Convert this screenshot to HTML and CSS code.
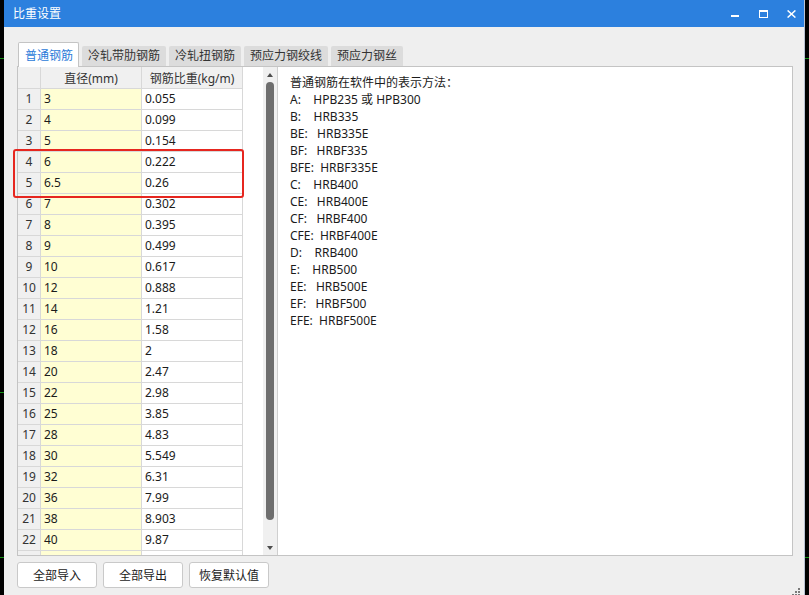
FILE: index.html
```html
<!DOCTYPE html>
<html lang="zh-CN">
<head>
<meta charset="utf-8">
<title>比重设置</title>
<link rel="stylesheet" href="styles.css">
</head>
<body>
<div class="window">
  <div class="titlebar">
    <span class="title">比重设置</span>
    <div class="controls">
      <svg class="ctl" width="8" height="8" viewBox="0 0 8 8"><rect x="0" y="5" width="8" height="2" fill="#fff"/></svg>
      <svg class="ctl ctl-max" width="9" height="8" viewBox="0 0 9 8"><rect x="0.5" y="0.5" width="8" height="7" fill="none" stroke="#fff"/><rect x="0" y="0" width="9" height="2" fill="#fff"/></svg>
      <svg class="ctl ctl-close" width="9" height="8" viewBox="0 0 9 8"><path d="M0.6 0.4 L8.4 7.6 M8.4 0.4 L0.6 7.6" stroke="#fff" stroke-width="1.4"/></svg>
    </div>
  </div>
  <div class="main">
    <div class="tabs">
      <div class="tab active">普通钢筋</div>
      <div class="tab">冷轧带肋钢筋</div>
      <div class="tab">冷轧扭钢筋</div>
      <div class="tab">预应力钢绞线</div>
      <div class="tab">预应力钢丝</div>
    </div>
    <div class="panel">
      <div class="grid-area">
        <div class="grid-clip">
          <div class="grid">
            <div class="cell h"></div><div class="cell h">直径(mm)</div><div class="cell h">钢筋比重(kg/m)</div>
            <div class="cell rh">1</div><div class="cell d">3</div><div class="cell">0.055</div>
            <div class="cell rh">2</div><div class="cell d">4</div><div class="cell">0.099</div>
            <div class="cell rh">3</div><div class="cell d">5</div><div class="cell">0.154</div>
            <div class="cell rh">4</div><div class="cell d">6</div><div class="cell">0.222</div>
            <div class="cell rh">5</div><div class="cell d">6.5</div><div class="cell">0.26</div>
            <div class="cell rh">6</div><div class="cell d">7</div><div class="cell">0.302</div>
            <div class="cell rh">7</div><div class="cell d">8</div><div class="cell">0.395</div>
            <div class="cell rh">8</div><div class="cell d">9</div><div class="cell">0.499</div>
            <div class="cell rh">9</div><div class="cell d">10</div><div class="cell">0.617</div>
            <div class="cell rh">10</div><div class="cell d">12</div><div class="cell">0.888</div>
            <div class="cell rh">11</div><div class="cell d">14</div><div class="cell">1.21</div>
            <div class="cell rh">12</div><div class="cell d">16</div><div class="cell">1.58</div>
            <div class="cell rh">13</div><div class="cell d">18</div><div class="cell">2</div>
            <div class="cell rh">14</div><div class="cell d">20</div><div class="cell">2.47</div>
            <div class="cell rh">15</div><div class="cell d">22</div><div class="cell">2.98</div>
            <div class="cell rh">16</div><div class="cell d">25</div><div class="cell">3.85</div>
            <div class="cell rh">17</div><div class="cell d">28</div><div class="cell">4.83</div>
            <div class="cell rh">18</div><div class="cell d">30</div><div class="cell">5.549</div>
            <div class="cell rh">19</div><div class="cell d">32</div><div class="cell">6.31</div>
            <div class="cell rh">20</div><div class="cell d">36</div><div class="cell">7.99</div>
            <div class="cell rh">21</div><div class="cell d">38</div><div class="cell">8.903</div>
            <div class="cell rh">22</div><div class="cell d">40</div><div class="cell">9.87</div>
            <div class="cell rh"></div><div class="cell d"></div><div class="cell"></div>
          </div>
        </div>
        <div class="highlight"></div>
      </div>
      <div class="scrollbar">
        <div class="arrow-up"></div>
        <div class="thumb"></div>
        <div class="arrow-down"></div>
      </div>
      <div class="info">
        <div class="line">普通钢筋在软件中的表示方法：</div>
        <div class="line">A:    HPB235 或 HPB300</div>
        <div class="line">B:    HRB335</div>
        <div class="line">BE:   HRB335E</div>
        <div class="line">BF:   HRBF335</div>
        <div class="line">BFE:  HRBF335E</div>
        <div class="line">C:    HRB400</div>
        <div class="line">CE:   HRB400E</div>
        <div class="line">CF:   HRBF400</div>
        <div class="line">CFE:  HRBF400E</div>
        <div class="line">D:    RRB400</div>
        <div class="line">E:    HRB500</div>
        <div class="line">EE:   HRB500E</div>
        <div class="line">EF:   HRBF500</div>
        <div class="line">EFE:  HRBF500E</div>
      </div>
    </div>
    <div class="buttons">
      <button class="btn">全部导入</button>
      <button class="btn">全部导出</button>
      <button class="btn">恢复默认值</button>
    </div>
  </div>
  <svg class="grip" width="8" height="7" viewBox="0 0 8 7"><g fill="#7a7a7a"><rect x="6" y="0" width="2" height="2"/><rect x="3" y="3" width="2" height="2"/><rect x="6" y="3" width="2" height="2"/><rect x="0" y="6" width="2" height="2"/><rect x="3" y="6" width="2" height="2"/><rect x="6" y="6" width="2" height="2"/></g></svg>
</div>
</body>
</html>
```
FILE: styles.css
```css
* { box-sizing: border-box; }

html, body { margin: 0; padding: 0; }

body {
  width: 809px;
  height: 595px;
  overflow: hidden;
  background:
    linear-gradient(#138f13, #138f13) 0 58px / 100% 1px no-repeat,
    linear-gradient(#138f13, #138f13) 0 557px / 100% 1px no-repeat,
    linear-gradient(#138f13, #138f13) 0 392px / 4px 1px no-repeat,
    #000;
  font-family: "Noto Sans", "Noto Sans CJK SC", sans-serif;
  font-size: 12px;
  color: #1b1b1b;
}

.window {
  position: relative;
  margin-left: 4px;
  width: 801px;
  height: 595px;
  background: #efefef;
  border-right: 1px solid #b8c2d2;
  display: flex;
  flex-direction: column;
}

.titlebar {
  flex: none;
  height: 27px;
  background: #2c80de;
  color: #fff;
  display: flex;
  align-items: center;
  padding-left: 9px;
}

.title { line-height: 27px; }

.controls {
  margin-left: auto;
  align-self: stretch;
  display: flex;
  align-items: flex-start;
  padding-top: 10px;
  padding-right: 8px;
}

.ctl { display: block; }
.ctl-max { margin-left: 20px; }
.ctl-close { margin-left: 19px; }

.main {
  display: flex;
  flex-direction: column;
  padding: 15px 11px 0 13px;
}

.tabs {
  position: relative;
  z-index: 1;
  display: flex;
  align-items: flex-end;
  gap: 3px;
  height: 25px;
  margin-left: 1px;
  margin-bottom: -1px;
}

.tab {
  height: 20px;
  line-height: 20px;
  padding: 0 6px;
  margin-bottom: 1px;
  background: #dcdcdc;
  color: #333;
  border-radius: 2px 2px 0 0;
  white-space: nowrap;
}

.tab.active {
  height: 25px;
  padding: 3px 5px 0 6px;
  margin-bottom: 0;
  background: #fff;
  color: #2b7bd9;
  border: 1px solid #c4c4c4;
  border-bottom: none;
}

.panel {
  height: 490px;
  border: 1px solid #c4c4c4;
  background: #fff;
  display: flex;
}

.grid-area {
  position: relative;
  flex: none;
  width: 245px;
}

.grid-clip {
  height: 100%;
  overflow: hidden;
}

.grid {
  display: grid;
  grid-template-columns: 23px 101px 101px;
  width: 225px;
}

.cell {
  height: 21px;
  line-height: 20px;
  padding-left: 3px;
  border-right: 1px solid #d8d8d8;
  border-bottom: 1px solid #d8d8d8;
  white-space: nowrap;
}

.cell.h {
  height: 22px;
  line-height: 21px;
  padding: 1px 0 0;
  background: #f0f0f0;
  color: #333;
  text-align: center;
}

.cell.rh {
  padding: 0;
  background: #f0f0f0;
  color: #333;
  text-align: center;
}

.cell.d { background: #fffed3; }

.highlight {
  position: absolute;
  left: -5px;
  top: 82px;
  width: 231px;
  height: 49px;
  border: 2px solid #e6261f;
  border-radius: 3px;
}

.scrollbar {
  flex: none;
  width: 14px;
  background: #f0f0f0;
  display: flex;
  flex-direction: column;
  align-items: center;
  padding: 6px 0 5px;
}

.arrow-up {
  width: 0;
  height: 0;
  border-left: 3.5px solid transparent;
  border-right: 3.5px solid transparent;
  border-bottom: 4px solid #4d4d4d;
}

.thumb {
  width: 8px;
  height: 438px;
  margin-top: 5px;
  background: #6e6e6e;
  border-radius: 4px;
}

.arrow-down {
  margin-top: auto;
  width: 0;
  height: 0;
  border-left: 3.5px solid transparent;
  border-right: 3.5px solid transparent;
  border-top: 4px solid #4d4d4d;
}

.info {
  flex: 1;
  border-left: 1px solid #cfcfcf;
  padding: 7px 12px;
  line-height: 17px;
}

.line { white-space: pre; }

.buttons {
  display: flex;
  gap: 6px;
  margin-top: 6px;
}

.btn {
  width: 80px;
  height: 26px;
  padding: 0;
  border: 1px solid #c9c9c9;
  border-radius: 3px;
  background: #fff;
  font: inherit;
  color: #1b1b1b;
}

.grip {
  position: absolute;
  left: 788px;
  bottom: 0;
  display: block;
}
```
